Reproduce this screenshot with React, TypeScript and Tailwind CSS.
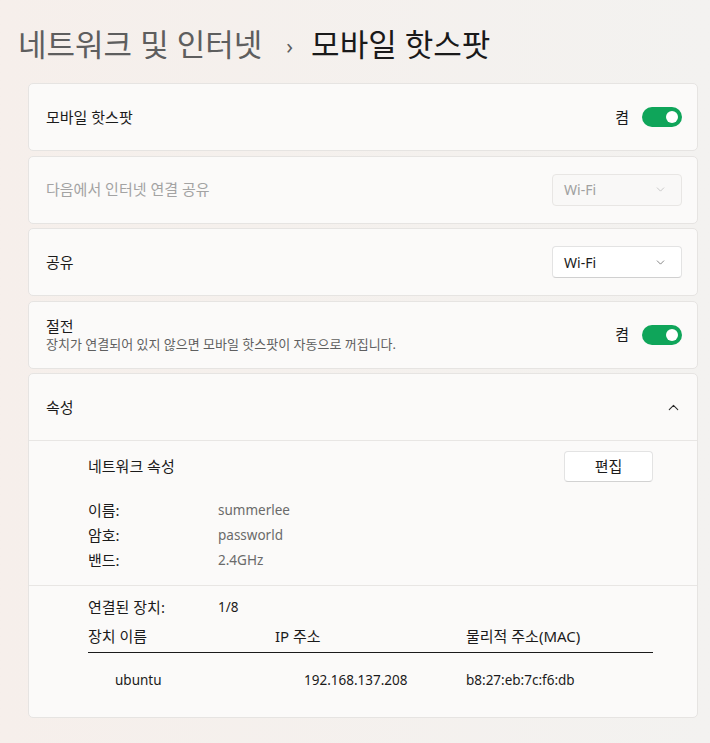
import { ChevronDown, ChevronUp } from "lucide-react";

const font = { fontFamily: '"Noto Sans", "Noto Sans CJK KR", sans-serif' };

function Toggle() {
  return (
    <div className="flex items-center gap-[13px]">
      <span className="text-[15px] text-[#1b1b1b]">켬</span>
      <div className="flex h-[20px] w-[40px] items-center justify-end rounded-full bg-[#0fa55a] pr-[4px]">
        <div className="h-[12px] w-[12px] rounded-full bg-white" />
      </div>
    </div>
  );
}

function Dropdown({ disabled }: { disabled?: boolean }) {
  return (
    <div
      className={
        disabled
          ? "flex h-[32px] w-[130px] items-center justify-between rounded-[4px] border border-[#e8e6e4] bg-[#f9f8f7] pl-[11px] pr-[14px] text-[14px] text-[#a0a0a0]"
          : "flex h-[32px] w-[130px] items-center justify-between rounded-[4px] border border-[#e3e3e3] border-b-[#d0d0d0] bg-white pl-[11px] pr-[14px] text-[14px] text-[#1b1b1b]"
      }
    >
      <span>Wi-Fi</span>
      <ChevronDown size={13} strokeWidth={1.3} className={disabled ? "text-[#b5b5b5]" : "text-[#555]"} />
    </div>
  );
}

export default function App() {
  return (
    <div
      style={font}
      className="min-h-[743px] w-[710px] bg-gradient-to-r from-[#f6efeb] to-[#f3f2f0] pb-[27px]"
    >
      <div className="flex h-[83px] items-center pl-[18px] pt-[6px] text-[31px] leading-none">
        <span className="text-[#5e5e5e]">네트워크 및 인터넷</span>
        <span className="ml-[24px] mr-[18px] text-[22px] text-[#5e5e5e]">›</span>
        <span className="text-[#1a1a1a]">모바일 핫스팟</span>
      </div>

      <div className="ml-[28px] mr-[12px] flex flex-col gap-[4.5px]">
        {/* 모바일 핫스팟 */}
        <div className="flex h-[68px] items-center justify-between rounded-[5px] border border-[#e6e4e2] bg-[#fbfaf9] pl-[17px] pr-[15px]">
          <span className="text-[15px] text-[#1b1b1b]">모바일 핫스팟</span>
          <Toggle />
        </div>

        <div className="flex h-[68px] items-center justify-between rounded-[5px] border border-[#e6e4e2] bg-[#fbfaf9] pl-[17px] pr-[15px]">
          <span className="text-[15px] text-[#a3a3a3]">다음에서 인터넷 연결 공유</span>
          <Dropdown disabled />
        </div>

        <div className="flex h-[68px] items-center justify-between rounded-[5px] border border-[#e6e4e2] bg-[#fbfaf9] pl-[17px] pr-[15px]">
          <span className="text-[15px] text-[#1b1b1b]">공유</span>
          <Dropdown />
        </div>

        <div className="flex h-[68px] items-center justify-between rounded-[5px] border border-[#e6e4e2] bg-[#fbfaf9] pl-[17px] pr-[15px]">
          <div className="flex flex-col leading-[18px]">
            <span className="text-[15px] text-[#1b1b1b]">절전</span>
            <span className="text-[13px] text-[#5f5f5f]">장치가 연결되어 있지 않으면 모바일 핫스팟이 자동으로 꺼집니다.</span>
          </div>
          <Toggle />
        </div>

        {/* 속성 */}
        <div className="rounded-[5px] border border-[#e6e4e2] bg-[#fbfaf9]">
          <div className="flex h-[67px] items-center justify-between border-b border-[#e8e6e4] pl-[17px] pr-[15px]">
            <span className="text-[15px] text-[#1b1b1b]">속성</span>
            <ChevronUp size={17} strokeWidth={1.5} className="text-[#2a2a2a]" />
          </div>

          <div className="border-b border-[#e8e6e4] pb-[12px] pl-[59px] pr-[44px] pt-[10px] text-[15px]">
            <div className="flex h-[31px] items-center justify-between">
              <span className="text-[#1b1b1b]">네트워크 속성</span>
              <div className="flex h-[31px] w-[89px] items-center justify-center rounded-[4px] border border-[#e3e3e3] border-b-[#d2d2d2] bg-white text-[#1b1b1b]">
                편집
              </div>
            </div>
            <div className="mt-[16px] flex flex-col">
              {[
                ["이름:", "summerlee"],
                ["암호:", "passworld"],
                ["밴드:", "2.4GHz"],
              ].map(([k, v]) => (
                <div key={k} className="flex h-[25px] items-center">
                  <span className="w-[130px] text-[#1b1b1b]">{k}</span>
                  <span className="text-[13.5px] text-[#6a6a6a]">{v}</span>
                </div>
              ))}
            </div>
          </div>

          <div className="pb-[10px] pl-[59px] pr-[44px] pt-[9px] text-[15px]">
            <div className="flex h-[24px] items-center">
              <span className="w-[130px] text-[#1b1b1b]">연결된 장치:</span>
              <span className="text-[13.5px] text-[#1b1b1b]">1/8</span>
            </div>
            <div className="mt-[6px] box-content flex h-[22px] items-center border-b border-[#1b1b1b] pb-[5px]">
              <span className="w-[187px] text-[#1b1b1b]">장치 이름</span>
              <span className="w-[191px] text-[#1b1b1b]">IP 주소</span>
              <span className="text-[#1b1b1b]">물리적 주소(MAC)</span>
            </div>
            <div className="flex h-[54px] items-center text-[13.5px] text-[#1b1b1b]">
              <span className="w-[216px] pl-[27px]">ubuntu</span>
              <span className="w-[162px]">192.168.137.208</span>
              <span>b8:27:eb:7c:f6:db</span>
            </div>
          </div>
        </div>
      </div>
    </div>
  );
}
